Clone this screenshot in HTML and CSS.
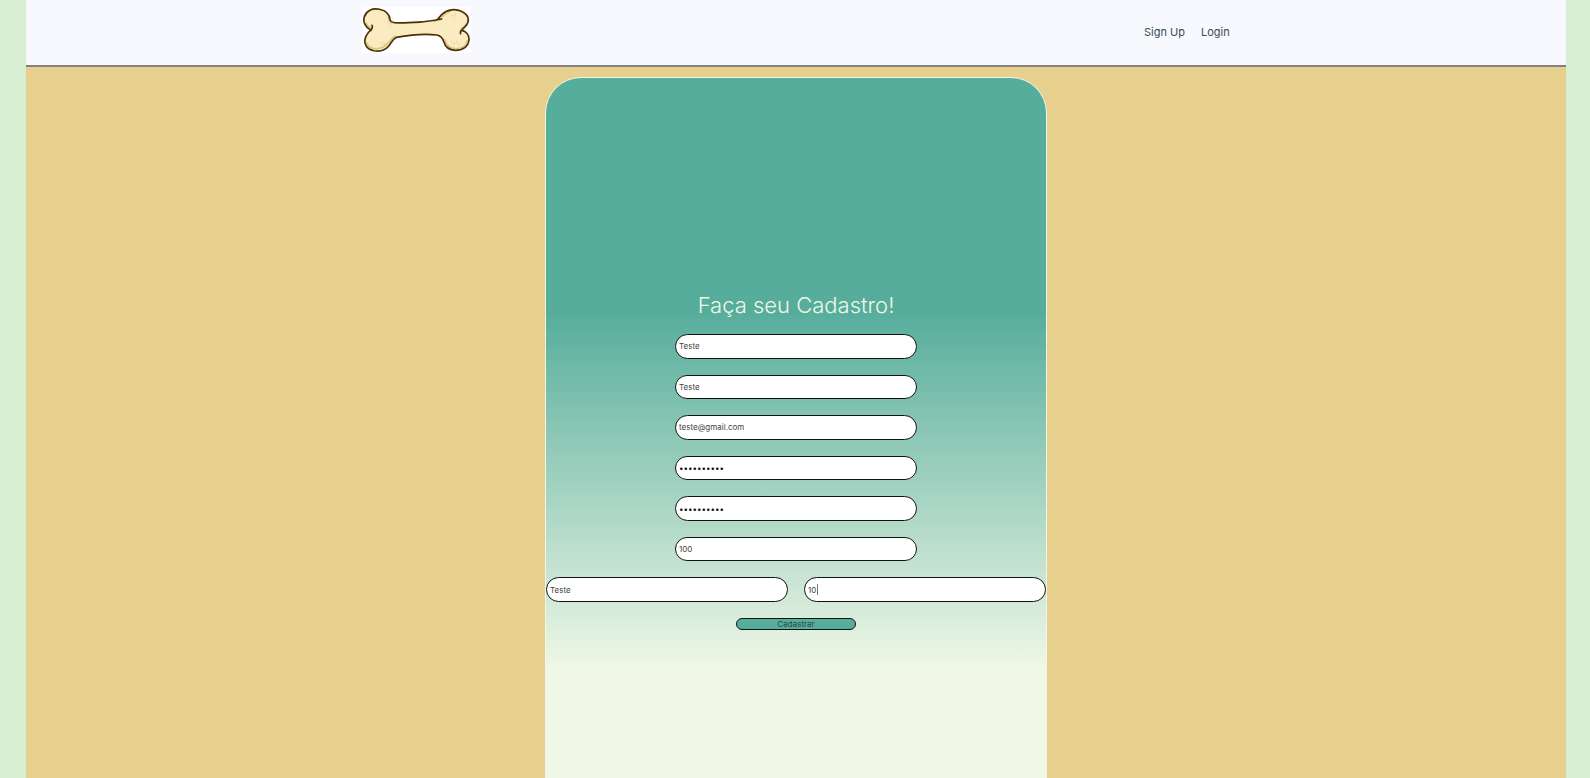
FILE: index.html
```html
<!DOCTYPE html>
<html lang="pt-BR">
<head>
<meta charset="utf-8">
<meta name="viewport" content="width=device-width, initial-scale=1">
<title>Cadastro</title>
<link rel="stylesheet" href="styles.css">
</head>
<body>
<div class="page">
  <header class="header">
    <a class="logo" href="#" aria-label="Início">
      <svg viewBox="38 22 326 136" aria-hidden="true">
        <rect x="38" y="22" width="326" height="136" fill="#fff"/>
        <path d="M64 90C48 82 40 66 45 50C51 32 69 24 90 28C110 32 121 45 122 60C124 65 127 67 134 68C175 70 222 67 262 60C268 55 272 48 279 42C293 28 318 26 335 34C353 43 360 56 353 71C349 80 342 84 336 91C350 94 359 105 358 120C356 139 340 151 317 151C298 150 287 141 283 126C279 114 274 107 262 105C225 101 180 105 141 112C130 116 127 127 118 138C107 151 91 155 74 152C54 148 44 135 47 118C49 105 56 98 64 90Z" fill="#fbebc0"/>
        <path d="M51 126C55 145 76 149 94 144C114 138 120 120 138 107M284 116C290 132 297 145 317 146C337 146 350 137 353 120M49 68C53 77 59 82 65 84M350 72C345 80 338 82 332 89M116 50C117 60 121 65 126 71M276 52C285 44 292 36 304 34" fill="none" stroke="#dac681" stroke-width="5"/>
        <path d="M64 90C48 82 40 66 45 50C51 32 69 24 90 28C110 32 121 45 122 60C124 65 127 67 134 68C175 70 222 67 262 60C268 55 272 48 279 42C293 28 318 26 335 34C353 43 360 56 353 71C349 80 342 84 336 91C350 94 359 105 358 120C356 139 340 151 317 151C298 150 287 141 283 126C279 114 274 107 262 105C225 101 180 105 141 112C130 116 127 127 118 138C107 151 91 155 74 152C54 148 44 135 47 118C49 105 56 98 64 90ZM68 76C70 82 68 88 64 92M258 61C265 57 270 59 276 57M333 101C331 95 333 92 337 90" fill="none" stroke="#4b3006" stroke-width="5" stroke-linejoin="round" stroke-linecap="round"/>
        <path d="M92 129h3M98 126h3M96 134h3M103 131h3M308 47h3M316 44h3M311 54h3M304 126h3M312 130h3M320 125h3M326 132h3M114 68h3M121 76h3" stroke="#d9c47c" stroke-width="3"/>
      </svg>
    </a>
    <nav class="nav">
      <a href="#">Sign Up</a>
      <a href="#">Login</a>
    </nav>
  </header>
  <main class="main">
    <form class="card">
      <h1 class="title">Faça seu Cadastro!</h1>
      <div class="fields">
        <input class="field" type="text" aria-label="Nome" value="Teste">
        <input class="field" type="text" aria-label="Sobrenome" value="Teste">
        <input class="field" type="email" aria-label="E-mail" value="teste@gmail.com">
        <input class="field" type="password" aria-label="Senha" value="teste12345">
        <input class="field" type="password" aria-label="Confirmar senha" value="teste12345">
        <input class="field" type="text" aria-label="Número" value="100">
        <div class="pair">
          <input class="field" type="text" aria-label="Nome do pet" value="Teste">
          <div class="active">
            <input class="field" type="text" aria-label="Idade do pet" value="10">
            <span class="caret"></span>
          </div>
        </div>
      </div>
      <button class="submit" type="submit">Cadastrar</button>
    </form>
  </main>
</div>
</body>
</html>
```
FILE: styles.css
```css
* {
  box-sizing: border-box;
}

body {
  margin: 0;
  background: #d8efd3;
  font-family: Inter, "Liberation Sans", sans-serif;
}

.page {
  height: 100vh;
  margin: 0 24px 0 26px;
  overflow: hidden;
  background: #e7d08d;
}

.header {
  display: flex;
  align-items: center;
  justify-content: space-around;
  height: 67px;
  padding-bottom: 5px;
  background: #f8f9ff;
  border-bottom: 2px solid #858080;
}

.logo svg {
  display: block;
  width: 109px;
  height: 46px;
}

.nav {
  display: flex;
  gap: 16px;
  padding-top: 4px;
}

.nav a {
  color: #3c4a50;
  font-size: 11px;
  line-height: 16px;
  text-decoration: none;
}

.main {
  display: flex;
  justify-content: center;
  padding-top: 10px;
}

.card {
  display: flex;
  flex-direction: column;
  align-items: center;
  width: 502px;
  height: 100vh;
  padding-top: 212px;
  border: 1px solid #f1f7e7;
  border-radius: 36px;
  background: linear-gradient(#56ad9c 30%, #f0f7e6 76%);
}

.title {
  margin: 0 0 14px;
  color: #f0f7e6;
  font-size: 22px;
  font-weight: 300;
  line-height: 30px;
}

.fields {
  display: grid;
  grid-auto-rows: 1fr;
  gap: 16px;
  justify-items: center;
  width: 100%;
  height: 268px;
}

.field {
  display: block;
  width: 242px;
  height: 100%;
  min-height: 0;
  padding: 0 3px;
  border: 1px solid #111;
  border-radius: 13px;
  background: #fff;
  color: #444;
  font-family: inherit;
  font-size: 8px;
}

.field[type="password"] {
  color: #111;
}

.pair {
  display: grid;
  grid-template-columns: auto auto;
  gap: 16px;
}

.active {
  position: relative;
}

.caret {
  position: absolute;
  top: 7px;
  left: 13px;
  width: 1px;
  height: 11px;
  background: #777;
}

.submit {
  width: 120px;
  height: 12px;
  margin-top: 16px;
  padding: 0;
  border: 1px solid #111;
  border-radius: 6px;
  background: #56ad9c;
  color: #24483f;
  font-family: inherit;
  font-size: 8px;
  line-height: 10px;
}
```
